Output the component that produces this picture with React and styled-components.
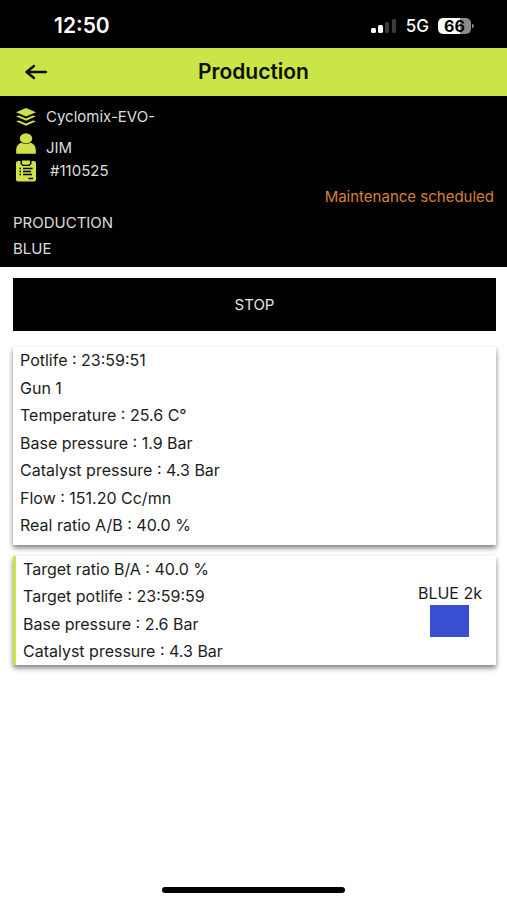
import styled, { createGlobalStyle } from "styled-components";

const GlobalStyle = createGlobalStyle`
  * {
    box-sizing: border-box;
  }

  body {
    margin: 0;
    background: #fff;
    color: #1c1c1c;
    font-family: Inter, "Liberation Sans", sans-serif;
    font-size: 16px;
    line-height: 20px;
  }
`

const Page = styled.div`
  display: flex;
  flex-direction: column;
  min-height: 100vh;
`

const StatusBar = styled.div`
  display: flex;
  align-items: center;
  justify-content: space-between;
  height: 48px;
  padding: 4px 36px 0 54px;
  background: #000;
  color: #fff;
`

const Time = styled.span`
  font-size: 21px;
  font-weight: 600;
`

const StatusIcons = styled.div`
  display: flex;
  align-items: center;
  gap: 9px;
  font-size: 17px;
  font-weight: 500;
`

const Battery = styled.span`
  position: relative;
  width: 33px;
  height: 16px;
  border-radius: 5px;
  background: linear-gradient(90deg, #fff 66%, #8b8b8b 66%);
  color: #000;
  font-size: 16px;
  font-weight: 700;
  line-height: 16px;
  text-align: center;

  &::after {
    content: "";
    position: absolute;
    top: 6px;
    right: -3px;
    width: 2px;
    height: 4px;
    border-radius: 0 2px 2px 0;
    background: #8b8b8b;
  }
`

const Header = styled.header`
  display: grid;
  grid-template-columns: 48px 1fr 48px;
  align-items: center;
  height: 48px;
  padding: 0 12px;
  background: #cae547;
  color: #0c0f00;
`

const BackButton = styled.button`
  display: flex;
  justify-content: center;
  padding: 0;
  border: 0;
  background: none;
  color: inherit;
  cursor: pointer;
`

const Title = styled.h1`
  margin: 0;
  font-size: 21px;
  font-weight: 600;
  line-height: 24px;
  text-align: center;
`

const Info = styled.section`
  display: flex;
  flex-direction: column;
  min-height: 171px;
  padding: 8px 13px 4px;
  background: #000;
  color: #dedede;
  font-size: 15px;
`

const InfoRow = styled.div`
  display: flex;
  align-items: ${({ $align }) => $align || "center"};
  gap: ${({ $gap }) => $gap || 9}px;
  height: ${({ $height }) => $height || 26}px;
  padding-left: 2px;

  svg {
    display: block;
    flex: none;
  }
`

const Maintenance = styled.p`
  margin: 2px 0;
  line-height: 22px;
  color: #d5832f;
  text-align: right;
`

const State = styled.p`
  margin: 0;
  line-height: 26px;
`

const Main = styled.main`
  display: flex;
  flex: 1;
  flex-direction: column;
  padding: 11px 11px 0 13px;
`

const StopButton = styled.button`
  height: 53px;
  margin-bottom: 16px;
  border: 0;
  background: #000;
  color: #e4e4e4;
  font: inherit;
  font-size: 15px;
  cursor: pointer;
`

const Card = styled.section`
  display: flex;
  align-items: center;
  justify-content: space-between;
  min-height: ${({ $height }) => $height}px;
  margin-bottom: 11px;
  padding: 3px 14px 4px 7px;
  border-left: ${({ $accent }) => ($accent ? "3px solid #cae547" : "0")};
  background: #fff;
  box-shadow: 0 3px 5px rgba(0, 0, 0, 0.5);
`

const List = styled.ul`
  display: flex;
  flex-direction: column;
  align-self: stretch;
  justify-content: space-between;
  margin: 0;
  padding: 0 0 ${({ $bottom }) => $bottom || 0}px;
  list-style: none;
`

const Product = styled.div`
  display: flex;
  flex-direction: column;
  align-items: center;
  gap: 2px;
`

const Swatch = styled.div`
  width: 39px;
  height: 32px;
  background: #394fd3;
`

const HomeIndicator = styled.div`
  align-self: center;
  width: 36%;
  height: 6px;
  margin-bottom: 7px;
  border-radius: 3px;
  background: #000;
`

const measures = [
  "Potlife : 23:59:51",
  "Gun 1",
  "Temperature : 25.6 C°",
  "Base pressure : 1.9 Bar",
  "Catalyst pressure : 4.3 Bar",
  "Flow : 151.20 Cc/mn",
  "Real ratio A/B : 40.0 %",
]

const targets = [
  "Target ratio B/A : 40.0 %",
  "Target potlife : 23:59:59",
  "Base pressure : 2.6 Bar",
  "Catalyst pressure : 4.3 Bar",
]

const SignalIcon = () => (
  <svg width="27" height="16" viewBox="0 0 27 16" aria-hidden="true">
    <rect x="1" y="10" width="5" height="5" rx="1.5" fill="#fff" />
    <rect x="8" y="7" width="5" height="8" rx="1.5" fill="#fff" />
    <rect x="15" y="4" width="4" height="11" rx="1.5" fill="#3a3a3a" />
    <rect x="22" y="1" width="4" height="14" rx="1.5" fill="#3a3a3a" />
  </svg>
)

const ArrowIcon = () => (
  <svg width="24" height="18" viewBox="0 0 24 18" fill="none" stroke="currentColor" strokeWidth="2.4" strokeLinecap="round" strokeLinejoin="round" aria-hidden="true">
    <path d="M22 9H3M10 3L2.5 9l7.5 6" />
  </svg>
)

const LayersIcon = () => (
  <svg width="22" height="20" viewBox="0 0 22 20" fill="#cfe04b" aria-hidden="true">
    <path d="M11 1L21 5.2 11 9.4 1 5.2z" />
    <path d="M1 9.2l3-.8 7 3 7-3 3 .8L11 13.8z" />
    <path d="M1 14.2l3-.8 7 3 7-3 3 .8-10 4.6z" />
  </svg>
)

const UserIcon = () => (
  <svg width="22" height="26" viewBox="0 0 22 26" fill="#cfe04b" aria-hidden="true">
    <ellipse cx="11" cy="6.4" rx="6.2" ry="5.2" />
    <path d="M1.2 21.7V18C1.2 14 4 11.4 6.5 10.8c2.7 1.7 6.3 1.7 9 0 2.5.6 5.3 3.2 5.3 7.2v3.7z" />
  </svg>
)

const ClipboardIcon = () => (
  <svg width="22" height="22" viewBox="0 0 22 22" aria-hidden="true">
    <path d="M3 1h16a2 2 0 0 1 2 2v16.5a2 2 0 0 1-2 2H3a2 2 0 0 1-2-2V3a2 2 0 0 1 2-2z" fill="#cfe04b" />
    <path d="M5.5 0h11v3.5L14.5 6h-7l-2-2.5z" fill="#000" />
    <path d="M7 .5h8v2.7l-1.2 1.6H8.200L7 3.200z" fill="#cfe04b" />
    <path d="M4.5 8.500H6M4.500 11.500H6M4.500 14.500H6M8 8.500h9.500M8 11.500h8M8 14.500h9M13.500 18.500h4.500" fill="none" stroke="#000" strokeWidth="1.3" />
  </svg>
)

export default function App() {
  return (
    <Page>
      <GlobalStyle />
      <StatusBar>
        <Time>12:50</Time>
        <StatusIcons>
          <SignalIcon />
          <span>5G</span>
          <Battery>66</Battery>
        </StatusIcons>
      </StatusBar>
      <Header>
        <BackButton type="button" aria-label="Back">
          <ArrowIcon />
        </BackButton>
        <Title>Production</Title>
      </Header>
      <Info>
        <InfoRow>
          <LayersIcon />
          <span>Cyclomix-EVO-</span>
        </InfoRow>
        <InfoRow $align="flex-end" $height={28}>
          <UserIcon />
          <span>JIM</span>
        </InfoRow>
        <InfoRow $gap={13}>
          <ClipboardIcon />
          <span>#110525</span>
        </InfoRow>
        <Maintenance>Maintenance scheduled</Maintenance>
        <State>PRODUCTION</State>
        <State>BLUE</State>
      </Info>
      <Main>
        <StopButton type="button">STOP</StopButton>
        <Card $height={198}>
          <List $bottom={6}>
            {measures.map((text) => (
              <li key={text}>{text}</li>
            ))}
          </List>
        </Card>
        <Card $height={109} $accent>
          <List>
            {targets.map((text) => (
              <li key={text}>{text}</li>
            ))}
          </List>
          <Product>
            <span>BLUE 2k</span>
            <Swatch />
          </Product>
        </Card>
      </Main>
      <HomeIndicator />
    </Page>
  );
}
